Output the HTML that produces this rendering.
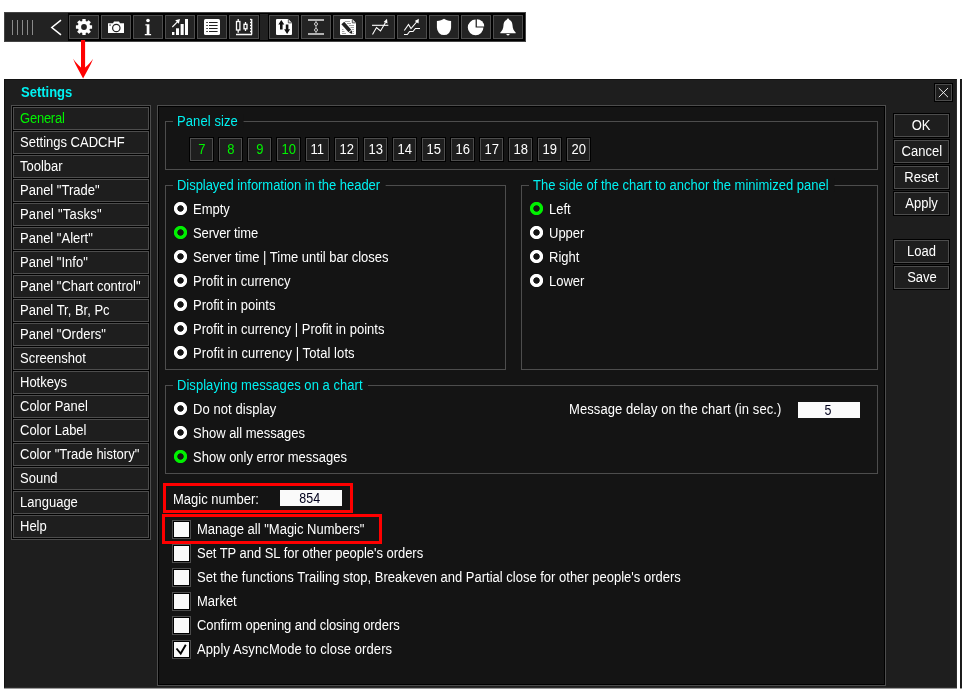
<!DOCTYPE html>
<html><head><meta charset="utf-8"><title>Settings</title>
<style>
html,body{margin:0;padding:0;background:#fff;}
body{width:962px;height:692px;position:relative;overflow:hidden;font-family:"Liberation Sans",Arial,sans-serif;font-size:14px;color:#fff;}
#root{position:absolute;left:0;top:0;width:962px;height:692px;will-change:transform;}
.a{position:absolute;box-sizing:border-box;}
.t{position:absolute;white-space:nowrap;line-height:14px;height:14px;}
.tb{position:absolute;box-sizing:border-box;width:30px;height:24px;top:15px;border:1px solid #4d4d4d;background:#232323;}
.tb svg{position:absolute;left:-1px;top:-1px;}
.mi{position:absolute;box-sizing:border-box;left:13px;width:136px;height:23px;border:1px solid #4d4d4d;background:#1e1e1e;line-height:21px;padding-left:6px;white-space:nowrap;}
.nb{position:absolute;box-sizing:border-box;top:137px;width:25px;height:25px;border:1px solid #000;background:#1e1e1e;box-shadow:inset 0 0 0 1px #4d4d4d;text-align:center;line-height:23px;}
.btn{position:absolute;box-sizing:border-box;left:893px;width:57px;height:25px;border:1px solid #000;background:#1e1e1e;box-shadow:inset 0 0 0 1px #4d4d4d;text-align:center;line-height:23px;}
.fs{position:absolute;box-sizing:border-box;border:1px solid #4d4d4d;}
.lg{position:absolute;background:#141414;color:#00f2f2;white-space:nowrap;line-height:14px;height:14px;padding:0 6px 0 4.3px;transform:scaleX(0.9286);transform-origin:0 50%;}
.rd{position:absolute;width:15px;height:15px;margin:-1px 0 0 -1px;background:radial-gradient(circle at 50% 50%,rgba(255,255,255,0) 2.8px,#fff 3.6px,#fff 6.2px,rgba(255,255,255,0) 7px);}
.rd.on{background:radial-gradient(circle at 50% 50%,rgba(0,240,0,0) 2.8px,#00f000 3.6px,#00f000 6.2px,rgba(0,240,0,0) 7px);}
.cb{position:absolute;box-sizing:border-box;left:172px;width:19px;height:19px;border:1px solid #4d4d4d;background:#000;}
.cb i{position:absolute;left:1px;top:1px;width:15px;height:15px;background:#fafafa;}
.inp{position:absolute;box-sizing:border-box;width:62px;height:16px;background:#fafafa;color:#00001c;text-align:center;line-height:16px;padding-right:2px;}
.red{position:absolute;box-sizing:border-box;border:3px solid #ff0000;}
.gr{color:#00f400;}
.s{display:inline-block;transform:scaleX(0.9286);transform-origin:0 50%;white-space:nowrap;}
.inp .c{transform:scaleX(0.89);}
.c{display:inline-block;transform:scaleX(0.9286);transform-origin:50% 50%;white-space:nowrap;}
</style></head>
<body>
<div id="root">
<div class="a" style="left:4px;top:12px;width:522px;height:30px;background:#222;border:1px solid #444;"></div>
<div class="a" style="left:68px;top:13px;width:192px;height:28px;background:#000;"></div>
<div class="a" style="left:268px;top:13px;width:257px;height:28px;background:#000;"></div>
<div class="a" style="left:260px;top:13px;width:8px;height:1px;background:#000;"></div><div class="a" style="left:260px;top:40px;width:8px;height:1px;background:#000;"></div>
<div class="a" style="left:12px;top:20px;width:1px;height:15px;background:#8a8a8a;"></div>
<div class="a" style="left:17px;top:20px;width:1px;height:15px;background:#8a8a8a;"></div>
<div class="a" style="left:22px;top:20px;width:1px;height:15px;background:#8a8a8a;"></div>
<div class="a" style="left:27px;top:20px;width:1px;height:15px;background:#8a8a8a;"></div>
<div class="a" style="left:32px;top:20px;width:1px;height:15px;background:#8a8a8a;"></div>
<svg class="a" style="left:44px;top:14px" width="24" height="26" viewBox="44 14 24 26"><path d="M61 20.200L51.800 27.500L61 34.800" fill="none" stroke="#fff" stroke-width="1.500"/></svg>
<div class="tb" style="left:69px"><svg width="30" height="24" viewBox="69 15 30 24"><g fill="#fff"><circle cx="84" cy="27" r="6.2"/>
<g id="gt"><rect x="82.3" y="18.9" width="3.4" height="16.2" rx="0.5"/></g>
<rect x="82.3" y="18.9" width="3.4" height="16.2" rx="0.5" transform="rotate(45 84 27)"/>
<rect x="82.3" y="18.9" width="3.4" height="16.2" rx="0.5" transform="rotate(90 84 27)"/>
<rect x="82.3" y="18.9" width="3.4" height="16.2" rx="0.5" transform="rotate(135 84 27)"/>
</g><circle cx="84" cy="27" r="2.9" fill="#232323"/></svg></div>
<div class="tb" style="left:101px"><svg width="30" height="24" viewBox="101 15 30 24"><path d="M108 23.2h5l1-1.8h5l1 1.8h4v9.8h-16z" fill="#fff"/><circle cx="116.3" cy="28" r="3.7" fill="#fff" stroke="#222" stroke-width="1.2"/><rect x="109.3" y="24.3" width="1.6" height="1.6" fill="#777"/></svg></div>
<div class="tb" style="left:133px"><svg width="30" height="24" viewBox="133 15 30 24"><g fill="#fff"><circle cx="148" cy="20.5" r="1.8"/><path d="M145.400 24.300h4v9.700h1.700v1.200h-6.300v-1.200h1.900v-8.500h-1.300z"/></g></svg></div>
<div class="tb" style="left:165px"><svg width="30" height="24" viewBox="165 15 30 24"><g fill="#fff"><rect x="172" y="32" width="2.4" height="3"/><rect x="176" y="28.3" width="3" height="6.7"/><rect x="180.6" y="24" width="3.1" height="11"/><rect x="185" y="19" width="3" height="16"/></g><path d="M172.3 27l5.6-5.6" stroke="#fff" stroke-width="1.1" fill="none"/><path d="M180 19l-1.2 4.8l-3.6-3.6z" fill="#fff"/></svg></div>
<div class="tb" style="left:197px"><svg width="30" height="24" viewBox="197 15 30 24"><rect x="204" y="19" width="16" height="16" rx="1.5" fill="#fff"/><g stroke="#222" stroke-width="1.1"><path d="M206.3 22.5h1.5M209 22.5h8.6M206.3 25.5h1.5M209 25.5h8.6M206.3 28.5h1.5M209 28.5h8.6M206.3 31.5h1.5M209 31.5h8.6"/></g></svg></div>
<div class="tb" style="left:229px"><svg width="30" height="24" viewBox="229 15 30 24"><g fill="none" stroke="#fff" stroke-width="1.300"><rect x="236.5" y="21.5" width="3.4" height="8.5"/><path d="M238.2 19v2.5M238.2 30v2.7"/><rect x="244" y="24.3" width="3" height="4.5"/><path d="M245.5 22v2.3M245.5 28.8v2.3"/><path d="M236 34.5h16M251.7 19v15.5"/><path d="M250 19.5h1.5M250 22.5h1.5M250 25.5h1.5M250 28.5h1.5M250 31.5h1.5"/></g></svg></div>
<div class="tb" style="left:269px"><svg width="30" height="24" viewBox="269 15 30 24"><path d="M277 19h11l4 4v11a1 1 0 0 1-1 1h-14a1 1 0 0 1-1-1v-14a1 1 0 0 1 1-1z" fill="#fff"/><path d="M288.3 19.3v3.6h3.5" fill="#ddd" stroke="#222" stroke-width="0.7"/><g fill="#111"><path d="M281.300 20l3 4.600h-1.700v4.800h-2.600v-4.800h-1.700z"/><path d="M287.100 33.900l-3-4.600h1.700v-4.800h2.600v4.800h1.700z"/></g></svg></div>
<div class="tb" style="left:301px"><svg width="30" height="24" viewBox="301 15 30 24"><g fill="#b2b2b2"><rect x="308" y="19" width="16" height="2"/><rect x="308" y="33" width="16" height="2"/></g><g fill="none" stroke="#ccc" stroke-width="1"><path d="M316 21v1.500M316 25.500v3M316 31.500v1.500"/><circle cx="316" cy="24" r="1.500"/><circle cx="316" cy="30" r="1.500"/></g></svg></div>
<div class="tb" style="left:333px"><svg width="30" height="24" viewBox="333 15 30 24"><path d="M341 19h11l4 4v11a1 1 0 0 1-1 1h-14a1 1 0 0 1-1-1v-14a1 1 0 0 1 1-1z" fill="#fff"/><path d="M352.3 19.3v3.6h3.5" fill="#ddd" stroke="#222" stroke-width="0.7"/><g stroke="#999" stroke-width="0.9"><path d="M345 21.5h5M347 23.5h4M349 25.5h5M350.5 27.5h3.5M352 29.5h2M352.5 31.5h1.5M353 33.5h1M342 29.5h1.5M342 31.5h2.5M342 33.5h4"/></g><path d="M341.400 24.200l2.800-2.500l7.100 8l-2.800 2.500z" fill="#222"/><path d="M349 32.800l2.800-2.500l0.600 3.700z" fill="#222"/></svg></div>
<div class="tb" style="left:365px"><svg width="30" height="24" viewBox="365 15 30 24"><g fill="none" stroke="#fff" stroke-width="1.1"><path d="M372 25.3h16.3"/><path d="M372.5 34.5l4-7l4 3.5l5-8.5"/></g><path d="M387 18.8l0.5 4.7l-3.8-1.6z" fill="#fff"/></svg></div>
<div class="tb" style="left:397px"><svg width="30" height="24" viewBox="397 15 30 24"><g fill="none" stroke="#fff" stroke-width="1.1"><path d="M404.3 30.5l4.2-6l2.5 4l6-7"/><path d="M404 34.5h3.3l2.3-3h3.4l2.4-3h4.6"/></g><path d="M418.8 18.8l-0.3 4.6l-3.7-2.3z" fill="#fff"/></svg></div>
<div class="tb" style="left:429px"><svg width="30" height="24" viewBox="429 15 30 24"><path d="M444 18.800c1.600 1.300 4.200 2 7.100 2.200v6.600a7.100 7.500 0 0 1-14.200 0v-6.600c2.900-0.200 5.500-0.900 7.100-2.200z" fill="#fff"/></svg></div>
<div class="tb" style="left:461px"><svg width="30" height="24" viewBox="461 15 30 24"><path d="M475.600 19.600a7.800 7.800 0 1 0 7.800 7.800h-7.800z" fill="#fff"/><path d="M476.900 19.200a7.300 7.300 0 0 1 7.300 7.300h-7.300z" fill="#fff"/></svg></div>
<div class="tb" style="left:493px"><svg width="30" height="24" viewBox="493 15 30 24"><g fill="#fff"><circle cx="508" cy="19.800" r="1.200"/><path d="M508 19.800c3.200 0 4.300 2.500 4.500 5.500c0.200 3.500 1.200 5.500 3.200 7.200v0.800h-15.400v-0.800c2-1.700 3-3.700 3.200-7.200c0.200-3 1.300-5.500 4.500-5.500z"/><path d="M506.300 34h3.400a1.700 1.400 0 0 1-3.400 0z"/></g></svg></div>
<svg class="a" style="left:70px;top:38px" width="28" height="44" viewBox="70 38 28 44"><path d="M81 40h4.100v27.500c3-2.500 6-5.500 8-8.700c-2.500 6.500-6.500 13-10 19.800c-3.500-6.800-7.500-13.300-10-19.800c2 3.200 5 6.200 7.900 8.700z" fill="#ff0000"/></svg>
<div class="a" style="left:960px;top:79px;width:2px;height:609px;background:#1e1e1e;border-left:1px solid #191919;border-top:1px solid #191919;"></div>
<div class="a" style="left:4px;top:79px;width:953px;height:609px;background:#1e1e1e;border:1px solid #131313;border-right-color:#2c2c2c;border-bottom-color:#2c2c2c;"></div>
<div class="t" style="left:21px;top:85px;font-weight:bold;color:#00f2f2;"><span class="s">Settings</span></div>
<div class="a" style="left:934px;top:83px;width:19px;height:19px;border:1px solid #000;background:#1e1e1e;box-shadow:inset 0 0 0 1px #4d4d4d;"></div>
<svg class="a" style="left:934px;top:83px" width="19" height="19" viewBox="934 83 19 19"><path d="M938.800 88l9.200 9.200M948 88l-9.200 9.200" stroke="#fff" stroke-width="0.9" fill="none"/></svg>
<div class="a" style="left:4px;top:688px;width:953px;height:1px;background:#9c9c9c;"></div><div class="a" style="left:960px;top:688px;width:2px;height:1px;background:#9c9c9c;"></div>
<div class="a" style="left:11px;top:105px;width:140px;height:435px;border:1px solid #4d4d4d;background:#000;"></div>
<div class="mi gr" style="top:107px"><span class="s" style="letter-spacing:-0.25px">General</span></div>
<div class="mi" style="top:131px"><span class="s">Settings CADCHF</span></div>
<div class="mi" style="top:155px"><span class="s">Toolbar</span></div>
<div class="mi" style="top:179px"><span class="s">Panel "Trade"</span></div>
<div class="mi" style="top:203px"><span class="s" style="letter-spacing:0.2px">Panel "Tasks"</span></div>
<div class="mi" style="top:227px"><span class="s">Panel "Alert"</span></div>
<div class="mi" style="top:251px"><span class="s">Panel "Info"</span></div>
<div class="mi" style="top:275px"><span class="s">Panel "Chart control"</span></div>
<div class="mi" style="top:299px"><span class="s">Panel Tr, Br, Pc</span></div>
<div class="mi" style="top:323px"><span class="s">Panel "Orders"</span></div>
<div class="mi" style="top:347px"><span class="s">Screenshot</span></div>
<div class="mi" style="top:371px"><span class="s">Hotkeys</span></div>
<div class="mi" style="top:395px"><span class="s">Color Panel</span></div>
<div class="mi" style="top:419px"><span class="s">Color Label</span></div>
<div class="mi" style="top:443px"><span class="s">Color "Trade history"</span></div>
<div class="mi" style="top:467px"><span class="s">Sound</span></div>
<div class="mi" style="top:491px"><span class="s">Language</span></div>
<div class="mi" style="top:515px"><span class="s">Help</span></div>
<div class="btn" style="top:113px"><span class="c">OK</span></div>
<div class="btn" style="top:139px"><span class="c">Cancel</span></div>
<div class="btn" style="top:165px"><span class="c">Reset</span></div>
<div class="btn" style="top:191px"><span class="c">Apply</span></div>
<div class="btn" style="top:239px"><span class="c">Load</span></div>
<div class="btn" style="top:265px"><span class="c">Save</span></div>
<div class="a" style="left:157px;top:105px;width:729px;height:581px;border:1px solid #4d4d4d;background:#141414;box-shadow:inset 0 0 0 1px #000;"></div>
<div class="fs" style="left:165px;top:121px;width:713px;height:49px;"></div>
<div class="lg" style="left:173px;top:114px;letter-spacing:0.1px;">Panel size</div>
<div class="fs" style="left:165px;top:185px;width:341px;height:185px;"></div>
<div class="lg" style="left:173px;top:178px;letter-spacing:-0.045px;">Displayed information in the header</div>
<div class="fs" style="left:521px;top:185px;width:357px;height:185px;"></div>
<div class="lg" style="left:529px;top:178px;">The side of the chart to anchor the minimized panel</div>
<div class="fs" style="left:165px;top:385px;width:713px;height:89px;"></div>
<div class="lg" style="left:173px;top:378px;letter-spacing:0.05px;">Displaying messages on a chart</div>
<div class="nb gr" style="left:189px"><span class="c">7</span></div>
<div class="nb gr" style="left:218px"><span class="c">8</span></div>
<div class="nb gr" style="left:247px"><span class="c">9</span></div>
<div class="nb gr" style="left:276px"><span class="c">10</span></div>
<div class="nb" style="left:305px"><span class="c">11</span></div>
<div class="nb" style="left:334px"><span class="c">12</span></div>
<div class="nb" style="left:363px"><span class="c">13</span></div>
<div class="nb" style="left:392px"><span class="c">14</span></div>
<div class="nb" style="left:421px"><span class="c">15</span></div>
<div class="nb" style="left:450px"><span class="c">16</span></div>
<div class="nb" style="left:479px"><span class="c">17</span></div>
<div class="nb" style="left:508px"><span class="c">18</span></div>
<div class="nb" style="left:537px"><span class="c">19</span></div>
<div class="nb" style="left:566px"><span class="c">20</span></div>
<div class="rd" style="left:174px;top:202.0px"></div>
<div class="t" style="left:192.5px;top:202.0px"><span class="s">Empty</span></div>
<div class="rd on" style="left:174px;top:226.0px"></div>
<div class="t" style="left:192.5px;top:226.0px"><span class="s" style="letter-spacing:-0.13px">Server time</span></div>
<div class="rd" style="left:174px;top:250.0px"></div>
<div class="t" style="left:192.5px;top:250.0px"><span class="s">Server time | Time until bar closes</span></div>
<div class="rd" style="left:174px;top:274.0px"></div>
<div class="t" style="left:192.5px;top:274.0px"><span class="s">Profit in currency</span></div>
<div class="rd" style="left:174px;top:298.0px"></div>
<div class="t" style="left:192.5px;top:298.0px"><span class="s">Profit in points</span></div>
<div class="rd" style="left:174px;top:322.0px"></div>
<div class="t" style="left:192.5px;top:322.0px"><span class="s" style="letter-spacing:0.03px">Profit in currency | Profit in points</span></div>
<div class="rd" style="left:174px;top:346.0px"></div>
<div class="t" style="left:192.5px;top:346.0px"><span class="s" style="letter-spacing:0.085px">Profit in currency | Total lots</span></div>
<div class="rd on" style="left:530px;top:202.0px"></div>
<div class="t" style="left:548.5px;top:202.0px"><span class="s">Left</span></div>
<div class="rd" style="left:530px;top:226.0px"></div>
<div class="t" style="left:548.5px;top:226.0px"><span class="s">Upper</span></div>
<div class="rd" style="left:530px;top:250.0px"></div>
<div class="t" style="left:548.5px;top:250.0px"><span class="s">Right</span></div>
<div class="rd" style="left:530px;top:274.0px"></div>
<div class="t" style="left:548.5px;top:274.0px"><span class="s">Lower</span></div>
<div class="rd" style="left:174px;top:402.0px"></div>
<div class="t" style="left:192.5px;top:402.0px"><span class="s" style="letter-spacing:0.08px">Do not display</span></div>
<div class="rd" style="left:174px;top:426.0px"></div>
<div class="t" style="left:192.5px;top:426.0px"><span class="s">Show all messages</span></div>
<div class="rd on" style="left:174px;top:450.0px"></div>
<div class="t" style="left:192.5px;top:450.0px"><span class="s">Show only error messages</span></div>
<div class="t" style="left:569px;top:402px"><span class="s" style="letter-spacing:0.085px">Message delay on the chart (in sec.)</span></div>
<div class="inp" style="left:798px;top:402px"><span class="c">5</span></div>
<div class="t" style="left:173px;top:492px"><span class="s">Magic number:</span></div>
<div class="inp" style="left:280px;top:490px"><span class="c">854</span></div>
<div class="red" style="left:163px;top:483px;width:190px;height:30px"></div>
<div class="red" style="left:162px;top:514px;width:220px;height:30px"></div>
<div class="cb" style="top:520px"><i></i></div>
<div class="t" style="left:197px;top:522px"><span class="s">Manage all "Magic Numbers"</span></div>
<div class="cb" style="top:544px"><i></i></div>
<div class="t" style="left:197px;top:546px"><span class="s" style="letter-spacing:-0.045px">Set TP and SL for other people's orders</span></div>
<div class="cb" style="top:568px"><i></i></div>
<div class="t" style="left:197px;top:570px"><span class="s">Set the functions Trailing stop, Breakeven and Partial close for other people's orders</span></div>
<div class="cb" style="top:592px"><i></i></div>
<div class="t" style="left:197px;top:594px"><span class="s">Market</span></div>
<div class="cb" style="top:616px"><i></i></div>
<div class="t" style="left:197px;top:618px"><span class="s" style="letter-spacing:-0.085px">Confirm opening and closing orders</span></div>
<div class="cb" style="top:640px"><i></i><svg style="position:absolute;left:0;top:0" width="17" height="17" viewBox="173 641 17 17"><path d="M176.500 648.5l4.200 5l5.100-8.800" fill="none" stroke="#000" stroke-width="1.900"/></svg></div>
<div class="t" style="left:197px;top:642px"><span class="s" style="letter-spacing:0.104px">Apply AsyncMode to close orders</span></div>
</div>
</body></html>
